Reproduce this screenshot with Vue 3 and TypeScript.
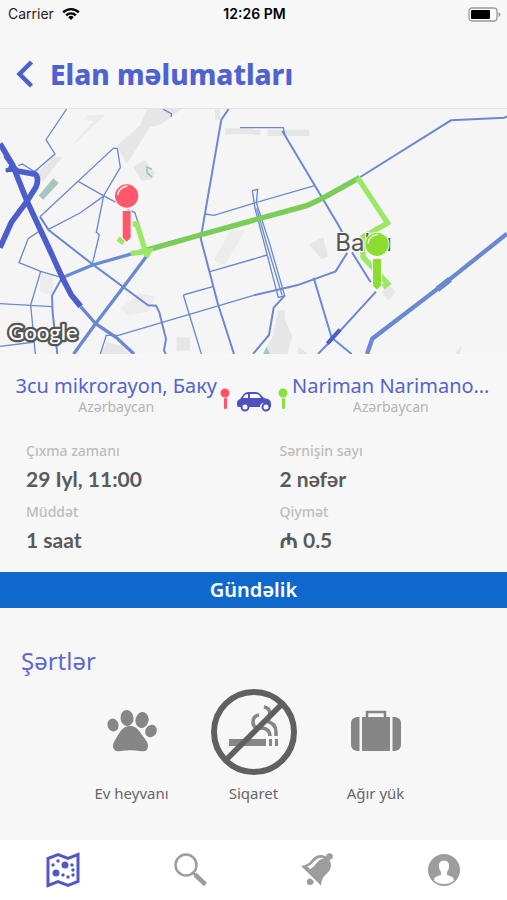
<script setup lang="ts">
interface Detail {
  label: string
  value: string
}

const details: Detail[] = [
  { label: 'Çıxma zamanı', value: '29 Iyl, 11:00' },
  { label: 'Sərnişin sayı', value: '2 nəfər' },
  { label: 'Müddət', value: '1 saat' },
  { label: 'Qiymət', value: '₼ 0.5' },
]
</script>

<template>
  <div class="screen">
    <div class="status">
      <div class="carrier">
        <span>Carrier</span>
        <svg width="18" height="14" viewBox="0 0 18 14" aria-hidden="true">
          <g fill="none" stroke="#000" stroke-width="2.4">
            <path d="M1.200 5.400a11 11 0 0 1 15.600 0" />
            <path d="M4.200 8.400a6.800 6.800 0 0 1 9.600 0" />
          </g>
          <path d="M9 13 6.200 10.200a4 4 0 0 1 5.600 0z" />
        </svg>
      </div>
      <time class="clock">12:26 PM</time>
      <svg class="battery" width="33" height="15" viewBox="0 0 33 15" aria-hidden="true">
        <rect x="1" y="1" width="28" height="13" rx="3" fill="#fff" stroke="#9a9a9a" stroke-width="1.300" />
        <rect x="3" y="3" width="19" height="9" rx="1" />
        <path d="M30.500 5v5q2-1 2-2.500t-2-2.500z" fill="#9a9a9a" />
      </svg>
    </div>

    <header class="header">
      <button class="back" type="button" aria-label="Geri">
        <svg width="18" height="28" viewBox="0 0 18 28" aria-hidden="true">
          <path d="M15.500 2 3.500 14l12 12" fill="none" stroke="#4c5fcf" stroke-width="4.500" />
        </svg>
      </button>
      <h1>Elan məlumatları</h1>
    </header>

    <main>
      <svg class="map" viewBox="0 12 1521 735" role="img" aria-label="Baku">
        <g fill="#e6e6e6">
          <path d="M440 12h105l-60 45-35 10-70 110-30-55 70-60z" />
          <path d="m210 128 70-80-30-2 10-14 55-4-25 25z" fill="#ececec" />
          <path d="m110 205 50-50 28 0-60 75z" />
          <path d="m400 185 35-20 30 40-10 18-30 5z" />
          <path d="M675 70h85v18h-85zM645 14h15v30h-15zM803 74h125v19H803zM759 74h22v16h-22z" />
          <path d="m640 465 50-85 45-5-60 105z" fill="#ececec" />
          <path d="m120 500 40 10-2 60-38-10z" fill="#ececec" />
          <path d="m360 610 60-45 45 10-20 45-60 10z" fill="#ececec" />
          <path d="M530 697h40v40h-40zM320 712l45 10 20 25h-82z" />
          <path d="m927 417 42-20 15 60-20 5z" />
          <path d="m835 615 20 0 0 30 22 50-15 52h-75l30-50z" />
          <path d="m895 725 30 22h-32zM1145 562l20-22 22 20-22 26zM1365 747l20-25-5 25z" />
        </g>
        <path d="m116 272 44-52 16 14-46 50z" fill="#a9c4bf" />
        <path d="M438 185l18 8M440 190l2 14 14 12" fill="none" stroke="#9ac6ba" stroke-width="5" />
        <path d="m790 747 10-22 9 22z" fill="#9ac6ba" />

        <g class="road thin">
          <path d="M200 12l-62 92 27 43-62 53M488 12l26 14v10" />
          <path d="M120 335 340 130h12l9 57-50 85-22 110 9 7-22 92" />
          <path d="M236 230l74 42 38 20m-38-18-70 50-96 50" />
          <path d="M382 314l22 8 13 38M125 374l-40 26-28 73 65 26 62 18" />
          <path d="M122 499 92 600l14 147M0 596l156 9M0 724l105-13" />
          <path d="M616 327l26 4 118-36 184-53M630 500l131-38 40-12M550 570l88-25M550 570l54 177" />
          <path d="M355 691l406-120M720 68h130l4 20M355 691l-36 0-18 56" />
          <path d="M757 257l16-4-4 40 39 120 46 159-19 5-70-267-8-53" />
          <path d="M770 310l28 100 48 160" />
          <path d="M103 200l12-8M55 182l12-5 36 23" />
        </g>
        <g class="road">
          <path d="M186 518l-30 54 2 52 14 123M120 335l26 40 128 100 170 126 24 1 10 20 20 80-6 35 6 10" />
          <path d="M686 12l-22 32-62 356 52 198 48 149" />
          <path d="M847 78l168 282 16 30M1056 442l56 90M1081 216l272-170 160-8 8-4" />
          <path d="M761 571l130-30 116-42 35-56M941 518l54 180 60 49M1128 560l-130 142-44 45" />
          <path d="M854 572l-33 36-14 82-48 57" />
        </g>
        <g class="road wide">
          <path d="M186 518l92-38 140-40 120-35M444 448l-78 104-80 105-65 90" />
          <path d="M242 605l46 52 60 40 54 50" />
          <path d="M1521 386l-188 150-216 165-16 46" stroke-width="13" />
          <path d="M1312 553l38-30" stroke-width="18" />
        </g>
        <g class="highway">
          <path d="M0 116l38 64 42 106 68 146 40 88 26 50 28 34" />
          <path d="M80 290 34 352 0 428M30 180l22 18 54 10q12 12 2 38L80 290" />
          <path d="M15 152l24 34-20 12m10-18 18 14-30 2" stroke-width="12" />
          <path d="M982 716l38-42" stroke-width="12" />
        </g>

        <g class="route">
          <path d="M438 436L600 390L759 346L920 302L967 280L1079 218" stroke="#7bcc58" />
          <path d="M1073 218l90 136-74 42v60l74 80-14 10" />
          <path d="M436 438l-26-84M392 446l56-8-10 18" />
          <path d="M354 401l18 12M398 357h20" />
        </g>

        <text class="city" x="1006" y="438">Baku</text>

        <g fill="#ff576b">
          <path d="M368 318h24v80l-12 12-12-12z" stroke="#fff" stroke-width="5" paint-order="stroke" />
          <circle cx="380" cy="273" r="35" stroke="#fff" stroke-width="5" paint-order="stroke" />
          <path d="M353 270q4-24 29-27" fill="none" stroke="#fff" stroke-width="4" />
        </g>
        <g fill="#8bdd2f">
          <path d="M1119 462h24v80l-12 12-12-12z" stroke="#fff" stroke-width="5" paint-order="stroke" />
          <circle cx="1131" cy="418" r="35" stroke="#fff" stroke-width="5" paint-order="stroke" />
          <path d="M1104 415q4-24 29-27" fill="none" stroke="#fff" stroke-width="4" />
        </g>
        <text class="brand" x="25" y="706">Google</text>
      </svg>

      <section class="trip">
        <div class="place">
          <h2>3cu mikrorayon, Баку</h2>
          <p>Azərbaycan</p>
        </div>
        <svg class="link" width="70" height="24" viewBox="0 0 70 24" aria-hidden="true">
          <g fill="#ff5468">
            <circle cx="6" cy="5" r="4.500" />
            <rect x="5" y="10" width="3" height="11" rx="1" />
          </g>
          <g fill="#8be03a">
            <circle cx="64" cy="5" r="4.500" />
            <rect x="63" y="10" width="3" height="11" rx="1" />
          </g>
          <path
            fill="#5151bd"
            fill-rule="evenodd"
            d="M18 15q0-3 3-4l3-4q2-3 5-3h8q3 0 5 3l3 3 4 1q3 1 3 5v3h-3a4 4 0 1 0-8 0H30a4 4 0 1 0-8 0h-3q-1 0-1-4zM24 10h5V6q-3 0-4 2zM31 10h11l-2-3q-1-1-3-1h-6z"
          />
          <g fill="#fff" stroke="#5151bd" stroke-width="2">
            <circle cx="26" cy="19" r="3.500" />
            <circle cx="47" cy="19" r="3.500" />
          </g>
        </svg>
        <div class="place">
          <h2>Nariman Narimano…</h2>
          <p>Azərbaycan</p>
        </div>
      </section>

      <dl class="details">
        <div v-for="item in details" :key="item.label">
          <dt>{{ item.label }}</dt>
          <dd>{{ item.value }}</dd>
        </div>
      </dl>

      <div class="banner">Gündəlik</div>

      <section class="terms">
        <h2>Şərtlər</h2>
        <ul>
          <li>
            <svg width="86" height="86" viewBox="0 0 86 86" fill="#868686" aria-hidden="true">
              <ellipse cx="24" cy="36" rx="5.500" ry="6.500" transform="rotate(-20 24 36)" />
              <ellipse cx="38" cy="29" rx="6.500" ry="8" transform="rotate(-5 38 29)" />
              <ellipse cx="53" cy="31" rx="6.500" ry="8" transform="rotate(15 53 31)" />
              <ellipse cx="62" cy="42" rx="5.500" ry="6.500" transform="rotate(35 62 42)" />
              <path d="M41 37c6 0 9 4 12 9 3 4 6 7 6 11 0 5-4 6-8 5-6-1-13-1-19 0-5 1-8-1-8-5s3-7 5-11c3-5 6-9 12-9z" />
            </svg>
            <span>Ev heyvanı</span>
          </li>
          <li>
            <svg width="86" height="86" viewBox="0 0 86 86" aria-hidden="true">
              <g fill="#868686">
                <path d="M18 50h37v7H18zM58 50h3v7h-3zM64 50h3v7h-3z" />
              </g>
              <g fill="none" stroke="#868686" stroke-width="3.500">
                <path d="M48 26q-6 1-6 7 0 6 6 6h3q8 1 8 8M53 18q6 1 6 7 0 6-4 7 10 2 10 11v4" />
              </g>
              <g fill="none" stroke="#606060">
                <circle cx="43" cy="43" r="40" stroke-width="6" />
                <path d="M15.500 70.500l54-54" stroke-width="5.500" />
              </g>
            </svg>
            <span>Siqaret</span>
          </li>
          <li>
            <svg width="86" height="86" viewBox="0 0 86 86" fill="#868686" aria-hidden="true">
              <path d="M29 28h28v34H29z" />
              <path d="M26.500 28v34H24q-6-1-6-6V34q0-5 6-6zM59.500 28v34h2.500q6-1 6-6V34q0-5-6-6z" />
              <path d="M34 28v-5h18v5" fill="none" stroke="#868686" stroke-width="2.500" />
            </svg>
            <span>Ağır yük</span>
          </li>
        </ul>
      </section>
    </main>

    <nav class="tabs">
      <a href="#map" aria-label="Xəritə" aria-current="page">
        <svg width="36" height="36" viewBox="0 0 36 36" aria-hidden="true">
          <path d="M3 6.500 13 2.500l10 4 10-4v27l-10 4-10-4-10 4z" fill="none" stroke="#5459c2" stroke-width="3" />
          <g fill="#5459c2">
            <circle cx="20" cy="13" r="3.500" />
            <circle cx="11" cy="21" r="3.500" />
            <circle cx="8" cy="13" r="1.700" />
            <circle cx="13" cy="9" r="1.700" />
            <circle cx="27" cy="13" r="1.700" />
            <circle cx="28" cy="18" r="1.700" />
            <circle cx="28" cy="23" r="1.700" />
            <circle cx="23" cy="25" r="1.700" />
            <circle cx="18" cy="23" r="1.700" />
          </g>
        </svg>
      </a>
      <a href="#search" aria-label="Axtar">
        <svg width="36" height="36" viewBox="0 0 36 36" fill="none" stroke="#9d9d9d" aria-hidden="true">
          <circle cx="14" cy="13" r="10.500" stroke-width="2.500" />
          <path d="M21 20.500l2.500 2.500" stroke-width="2.500" />
          <path d="M23 22.500l10.500 10" stroke-width="4.500" />
        </svg>
      </a>
      <a href="#alerts" aria-label="Bildirişlər">
        <svg width="36" height="36" viewBox="0 0 36 36" fill="#9d9d9d" aria-hidden="true">
          <circle cx="30.500" cy="4.500" r="3.300" />
          <path d="M27 4.500c5 3 6.500 9 3.500 14-3 4-8 6-8.500 15L2 14c7-1 9-4 12-7.500 4-4 9-4.500 13-2z" />
          <path d="M8.500 14.500c6-2 6-7 12-8.500 1.500-.3 3-.3 4.500.5-7 .5-8 8-14 10.500z" fill="#fff" />
          <path d="M8 31q-1-5 4-4.500l3 3q-1 4-4.500 3.500-2 0-2.500-2z" />
        </svg>
      </a>
      <a href="#profile" aria-label="Profil">
        <svg width="36" height="36" viewBox="0 0 36 36" aria-hidden="true">
          <circle cx="18" cy="18" r="16" fill="#9d9d9d" />
          <path d="M18 8.500c4 0 5.500 3 5 6.500-.3 3-1.500 4-2 5v3c3 1 7 1.500 7 5.500q-4 3.500-10 3.500T8 28.500c0-4 4-4.500 7-5.500v-3c-.5-1-1.700-2-2-5-.5-3.500 1-6.500 5-6.500z" fill="#fff" />
        </svg>
      </a>
    </nav>
  </div>
</template>

<style>
body {
  background: #f7f7f7;
}
</style>

<style scoped>
.screen {
  display: flex;
  flex-direction: column;
  min-height: 100vh;
  font-family: 'Noto Sans', 'DejaVu Sans', sans-serif;
  background: #f7f7f7;
}

h1,
h2,
p,
dl,
dd,
ul {
  margin: 0;
  padding: 0;
}

.status {
  display: grid;
  grid-template-columns: 1fr auto 1fr;
  align-items: center;
  height: 28px;
  padding: 0 6px 0 8px;
  font: 14px/28px Inter, sans-serif;
  color: #222;
}

.carrier {
  display: flex;
  align-items: center;
  gap: 8px;
}

.clock {
  font-weight: 600;
  color: #000;
}

.battery {
  justify-self: end;
}

.header {
  display: flex;
  align-items: center;
  gap: 16px;
  height: 81px;
  box-sizing: border-box;
  padding: 12px 16px 0;
  border-bottom: 1px solid #e4e4e4;
}

.back {
  display: flex;
  padding: 0;
  border: 0;
  background: none;
}

h1 {
  font-size: 28px;
  line-height: 40px;
  font-weight: 800;
  color: #5062cf;
}

.map {
  display: block;
  width: 100%;
  background: #f5f5f5;
}

.road {
  fill: none;
  stroke: #6a89d0;
  stroke-width: 6;
}

.thin {
  stroke-width: 4;
}

.wide {
  stroke-width: 10;
}

.highway {
  fill: none;
  stroke: #4d5ecb;
  stroke-width: 17;
  stroke-linejoin: round;
}

.route {
  fill: none;
  stroke: #9be866;
  stroke-width: 16;
}

.city {
  font: 72px Inter, sans-serif;
  fill: #555;
  stroke: #f5f5f5;
  stroke-width: 6;
  paint-order: stroke;
}

.brand {
  font: 500 66px Lato, sans-serif;
  fill: #fff;
  stroke: #555;
  stroke-width: 14;
  stroke-linejoin: round;
  paint-order: stroke;
}

.trip {
  display: flex;
  justify-content: space-between;
  padding: 19px 14px 0;
}

.place {
  flex: 1;
  min-width: 0;
  text-align: center;
}

.place h2 {
  white-space: nowrap;
  font-size: 20px;
  line-height: 26px;
  font-weight: 400;
  color: #5563cd;
}

.place p {
  font-size: 14px;
  line-height: 16px;
  color: #b4b4b4;
}

.link {
  flex: none;
  margin-top: 15px;
}

.details {
  display: grid;
  grid-template-columns: 1fr 1fr;
  row-gap: 9px;
  padding: 26px 0 18px;
}

.details div {
  display: grid;
  gap: 4px;
  padding-left: 26px;
}

dt {
  font-size: 14px;
  line-height: 20px;
  font-weight: 500;
  color: #bcbcbc;
}

dd {
  font-family: Lato, 'Noto Sans', sans-serif;
  font-size: 21px;
  line-height: 28px;
  font-weight: 700;
  color: #5a5a5a;
}

.banner {
  background: #0f69cd;
  color: #fff;
  font-size: 20px;
  line-height: 36px;
  font-weight: 600;
  text-align: center;
}

.terms {
  padding: 38px 0 36px;
}

.terms h2 {
  padding: 0 21px;
  font-size: 24px;
  line-height: 30px;
  font-weight: 400;
  color: #5f69cc;
}

.terms ul {
  display: grid;
  grid-template-columns: repeat(3, 122px);
  justify-content: center;
  padding-top: 13px;
  list-style: none;
}

.terms li {
  display: flex;
  flex-direction: column;
  align-items: center;
  gap: 8px;
  font-size: 15px;
  line-height: 20px;
  color: #666;
}

.tabs {
  display: grid;
  grid-template-columns: repeat(4, 1fr);
  height: 60px;
  margin-top: auto;
  background: #fff;
}

.tabs a {
  display: flex;
  align-items: center;
  justify-content: center;
}
</style>
